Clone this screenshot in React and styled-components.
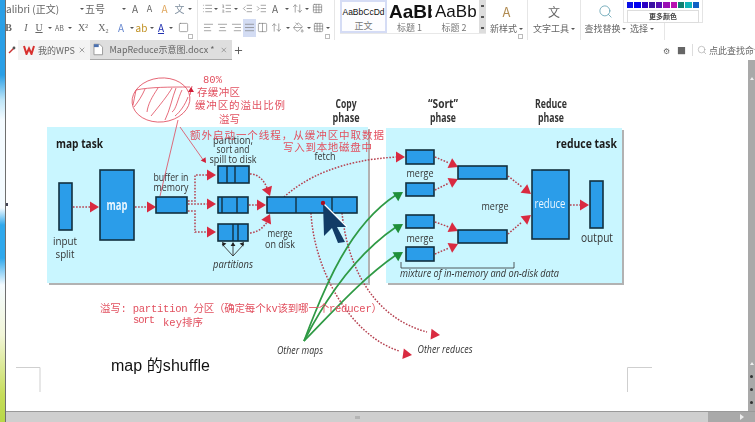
import React from 'react';
import styled, { createGlobalStyle } from 'styled-components';
import {
  AlignCenter, AlignJustify, AlignLeft, AlignRight, Grid3x3, IndentDecrease, IndentIncrease,
  List, ListOrdered, Plus, Search, X, ArrowUpDown, Columns2, PaintBucket, Square,
} from 'lucide-react';

const GlobalStyle = createGlobalStyle`
  html, body { margin: 0; padding: 0; background: #fff; overflow: hidden; }
  body { font-family: "Noto Sans CJK SC", "Liberation Sans", sans-serif; }
`;

const Screen = styled.div`
  width: 755px;
  height: 422px;
  display: flex;
  overflow: hidden;
`;

const DesktopEdge = styled.div`
  width: 5px;
  flex: none;
  border-right: 1px solid #6f6f6f;
  background: linear-gradient(#2a9fe6 0, #2a9fe6 75px, #bfe6f8 100px, #f4fbff 120px, #f4fbff 208px, #2fa8ec 225px, #2fa8ec 258px, #f4fbff 285px, #f2f6d8 335px, #c6dd5a 395px, #b8d848 422px);
`;

const Window = styled.div`
  flex: 1;
  min-width: 0;
  display: flex;
  flex-direction: column;
`;

const Ribbon = styled.div`
  height: 40px;
  flex: none;
  display: flex;
  position: relative;
  color: #666;
  font-size: 9px;
  filter: blur(0.4px);
`;

const FontGroup = styled.div`
  width: 191px;
  flex: none;
  border-right: 1px solid #e6e6e6;
  position: relative;
`;

const ParaGroup = styled.div`
  width: 137px;
  flex: none;
  padding-left: 3px;
  box-sizing: border-box;
  border-right: 1px solid #e6e6e6;
  position: relative;
`;

const Row = styled.div`
  height: 19px;
  display: flex;
  align-items: center;
  &:first-child { margin-top: -1px; }
`;

const Cell = styled.div`
  width: ${(p) => p.$w}px;
  height: 18px;
  flex: none;
  margin-left: ${(p) => p.$ml || 0}px;
  display: flex;
  align-items: center;
  justify-content: ${(p) => (p.$left ? 'flex-start' : 'center')};
  font-size: ${(p) => p.$size || 9}px;
  font-family: ${(p) => (p.$serif ? '"Liberation Serif", serif' : 'inherit')};
  font-style: ${(p) => (p.$italic ? 'italic' : 'normal')};
  color: ${(p) => p.$color || '#666'};
  background: ${(p) => (p.$on ? '#d3dcf3' : 'transparent')};
  white-space: nowrap;
`;

const Caret = styled.span`
  width: ${(p) => p.$w || 7}px;
  flex: none;
  display: flex;
  justify-content: center;
  &::after {
    content: '';
    border: 2px solid transparent;
    border-top: 2.5px solid #555;
    border-bottom: 0;
  }
`;

const Launcher = styled.span`
  position: absolute;
  right: 4px;
  bottom: 1px;
  width: 3px;
  height: 3px;
  border: 1px solid #bbb;
`;

const Gallery = styled.div`
  display: flex;
  width: 146px;
  height: 33px;
  margin-left: 5px;
  flex: none;
  border-bottom: 1px solid #e8e8e8;
`;

const StyleCard = styled.div`
  width: ${(p) => p.$w}px;
  height: 33px;
  box-sizing: border-box;
  flex: none;
  display: flex;
  flex-direction: column;
  align-items: center;
  overflow: hidden;
  border: ${(p) => (p.$on ? '2px solid #d5dcf5' : '0')};
  background: ${(p) => (p.$on ? '#fdfdff' : 'transparent')};
`;

const StyleSample = styled.div`
  height: 20px;
  line-height: 20px;
  margin-top: ${(p) => (p.$on ? 0 : 2)}px;
  width: 100%;
  text-align: center;
  white-space: nowrap;
  overflow: hidden;
  color: #111;
  font-family: "Liberation Sans", sans-serif;
  font-size: ${(p) => p.$size}px;
  font-weight: ${(p) => (p.$bold ? 700 : 400)};
  padding-left: ${(p) => p.$pad || 0}px;
`;

const StyleName = styled.div`
  font-size: 9px;
  line-height: 11px;
  color: #777;
`;

const GalleryScroll = styled.div`
  width: 7px;
  height: 33px;
  margin-left: 3px;
  flex: none;
  display: flex;
  flex-direction: column;
  background: #ddd;
  align-items: center;
  justify-content: space-around;
  & > span { width: 3px; height: 2px; background: #555; }
`;

const BigTool = styled.div`
  width: ${(p) => p.$w}px;
  flex: none;
  box-sizing: border-box;
  padding-right: ${(p) => p.$pr || 0}px;
  display: flex;
  flex-direction: column;
  align-items: center;
  position: relative;
  ${(p) => (p.$line ? 'border-right: 1px solid #e6e6e6;' : '')}
  height: 40px;
`;

const BigIcon = styled.div`
  height: 22px;
  display: flex;
  align-items: center;
  justify-content: center;
`;

const BigLabel = styled.div`
  font-size: 9px;
  line-height: 13px;
  color: #666;
  white-space: nowrap;
  display: flex;
  align-items: center;
  gap: 1px;
`;

const Palette = styled.div`
  position: absolute;
  left: 617px;
  top: 0;
  width: 80px;
  height: 23px;
  box-sizing: border-box;
  padding: 2px 3px 0;
  background: #fff;
  border: 1px solid #e4e4e4;
  border-top: 0;
`;

const Swatches = styled.div`
  display: flex;
  gap: 1px;
  height: 6px;
`;

const Swatch = styled.i`
  flex: 1;
  background: ${(p) => p.$c};
`;

const MoreColors = styled.div`
  height: 11px;
  margin-top: 2px;
  border: 1px solid #ddd;
  font-size: 7px;
  line-height: 11px;
  font-weight: 700;
  text-align: center;
  color: #444;
`;

const TabBar = styled.div`
  height: 20px;
  flex: none;
  display: flex;
  align-items: stretch;
  background: #fff;
  color: #666;
  font-size: 9px;
  filter: blur(0.3px);
`;

const Pin = styled.div`
  width: 12px;
  flex: none;
  display: flex;
  align-items: center;
  justify-content: center;
`;

const Tab = styled.div`
  width: ${(p) => p.$w}px;
  flex: none;
  box-sizing: border-box;
  padding: 0 4px 0 ${(p) => p.$pad}px;
  display: flex;
  align-items: center;
  gap: ${(p) => p.$gap}px;
  white-space: nowrap;
  background: ${(p) => (p.$on ? '#dedede' : '#f3f3f3')};
  border-bottom: ${(p) => (p.$on ? '1px solid #aaa' : '0')};
`;

const TabTitle = styled.span`
  flex: 1;
`;

const Tail = styled.div`
  margin-left: auto;
  display: flex;
  align-items: center;
  overflow: hidden;
  width: 94px;
  flex: none;
  white-space: nowrap;
  & > * { flex: none; }
`;

const TailBar = styled.span`
  width: 1px;
  height: 12px;
  margin-right: 4px;
  background: #ddd;
`;

const DocRow = styled.div`
  flex: 1;
  min-height: 0;
  display: flex;
`;

const Page = styled.div`
  flex: 1;
  min-width: 0;
  background: #fff;
`;

const Figure = styled.svg`
  display: block;
  width: 100%;
  height: 100%;
  filter: blur(0.45px);
`;

const SideRail = styled.div`
  width: 7px;
  flex: none;
  background: #a9a9a9;
  display: flex;
  flex-direction: column;
  justify-content: flex-end;
  align-items: center;
  gap: 10px;
  padding: 17px 0 7px;
  box-sizing: border-box;
`;

const RailArrow = styled.i`
  border: 2.5px solid transparent;
  border-bottom: 3px solid #eee;
  border-top: 0;
  margin-bottom: ${(p) => (p.$far ? 'auto' : '0')};
`;

const RailDot = styled.i`
  width: 3px;
  height: 3px;
  background: #333;
  border-radius: 50%;
`;

const BottomBar = styled.div`
  height: 11px;
  flex: none;
  display: flex;
  background: #a9a9a9;
  border-top: 1px solid #999;
  box-sizing: border-box;
`;

const BottomThumb = styled.div`
  width: 702px;
  flex: none;
  background: #cfcfcf;
  display: flex;
  align-items: center;
  justify-content: center;
  & > span { width: 5px; height: 3px; background: #b4b4b4; }
`;

const BottomArrow = styled.div`
  flex: 1;
  padding-left: 20px;
  display: flex;
  align-items: center;
  justify-content: center;
  &::after {
    content: '';
    border: 3px solid transparent;
    border-left: 4px solid #eee;
    border-right: 0;
  }
`;

// condensed book-style label, squeezed to the width it has in the picture
const Label = ({ x, y, w, size = 11.5, bold, italic, fill = '#343434', anchor = 'middle', children }) => (
  <text
    x={x}
    y={y}
    textLength={w}
    lengthAdjust="spacingAndGlyphs"
    textAnchor={anchor}
    fontSize={size}
    fontWeight={bold ? 700 : 400}
    fontStyle={italic ? 'italic' : 'normal'}
    fill={fill}
    fontFamily='"Open Sans", "Liberation Sans", sans-serif'
  >
    {children}
  </text>
);

const Note = ({ x, y, w, size = 10.5, children }) => (
  <text
    x={x}
    y={y}
    textLength={w}
    fontSize={size}
    fill="#e2505f"
    fontFamily='"Liberation Mono", "Noto Sans CJK SC", monospace'
  >
    {children}
  </text>
);

const Box = ({ x, y, w, h, bars = [] }) => (
  <g>
    <rect x={x} y={y} width={w} height={h} fill="#2b9de9" stroke="#12303f" strokeWidth="1.6" />
    {bars.map((b) => (
      <line key={b} x1={b} x2={b} y1={y} y2={y + h} stroke="#12303f" strokeWidth="1.4" />
    ))}
  </g>
);

// triangle head with its tip at x,y, pointing along the angle in degrees
const Head = ({ x, y, a = 0, fill = '#d92a40', size = 9 }) => (
  <polygon
    points={`0,0 ${-size},${-size * 0.6} ${-size},${size * 0.6}`}
    fill={fill}
    transform={`translate(${x} ${y}) rotate(${a})`}
  />
);

const Dots = ({ d, color = '#b5404f' }) => (
  <path d={d} fill="none" stroke={color} strokeWidth="1.5" strokeDasharray="1.6 1.5" />
);

const swatches = ['#0a10e6', '#0000f0', '#2a00c4', '#3a10a4', '#5610b4', '#9a10b4', '#b810b0', '#108070', '#10b4b8', '#1060c4'];

const ic = { size: 11, strokeWidth: 1.4, color: '#777' };

const Diagram = () => (
  <Figure viewBox="6 60 742 351">
    {/* panels with their drop shadow */}
    <rect x="49" y="129" width="321" height="156" fill="#b2b2b2" />
    <rect x="388" y="130" width="236" height="155" fill="#b2b2b2" />
    <rect x="47" y="127" width="321" height="156" fill="#c9f6ff" />
    <rect x="386" y="128" width="236" height="155" fill="#c9f6ff" />

    {/* map side dotted runs */}
    <Dots d="M73 207H91" />
    <Dots d="M135 207H148" />
    <Dots d="M188 204H208" />
    <Dots d="M188 201H195V175H208" />
    <Dots d="M188 211H195V232H208" />
    <Dots d="M250 174C258 174 264 180 267 188" />
    <Dots d="M249 205H258" />
    <Dots d="M250 233C258 232 263 228 267 222" />
    <Dots d="M284 197C305 178 340 160 397 157" />
    <Dots d="M311 213C314 270 350 335 399 351" />
    <Dots d="M342 213C348 270 375 318 427 332" />

    <Head x={99} y={207} />
    <Head x={156} y={207} />
    <Head x={216} y={204} />
    <Head x={216} y={175} />
    <Head x={216} y={232} />
    <Head x={270} y={196} a={70} />
    <Head x={266} y={205} />
    <Head x={270} y={214} a={-65} />
    <Head x={405} y={157} />
    <Head x={412} y={355} a={8} />
    <Head x={440} y={335} a={5} />

    <Box x={59} y={183} w={13} h={47} />
    <Box x={100} y={170} w={34} h={70} />
    <Box x={156} y={197} w={31} h={16} />
    <Box x={218} y={166} w={31} h={17} bars={[227, 235]} />
    <Box x={218} y={197} w={30} h={16} bars={[222, 237]} />
    <Box x={218} y={224} w={30} h={17} bars={[233, 238]} />
    <Box x={267} y={197} w={90} h={16} bars={[296, 332]} />

    {/* partitions pointers */}
    <g stroke="#333" strokeWidth="0.9" fill="none">
      <path d="M233 256L222 244M233 256V244M233 256L244 244" />
    </g>
    <Head x={222} y={242} a={-130} fill="#222" size={4} />
    <Head x={233} y={242} a={-90} fill="#222" size={4} />
    <Head x={244} y={242} a={-50} fill="#222" size={4} />

    {/* reduce side */}
    <Dots d="M435 157L449 163" />
    <Dots d="M435 190L449 183" />
    <Dots d="M435 222L449 227" />
    <Dots d="M435 254L449 248" />
    <Dots d="M508 176L522 187" />
    <Dots d="M508 234L522 222" />
    <Dots d="M570 205H581" />

    <Head x={458} y={167} a={25} />
    <Head x={458} y={179} a={-25} />
    <Head x={458} y={231} a={25} />
    <Head x={458} y={244} a={-25} />
    <Head x={531} y={194} a={38} />
    <Head x={531} y={215} a={-38} />
    <Head x={589} y={205} />

    <Box x={406} y={150} w={28} h={14} />
    <Box x={406} y={183} w={28} h={13} />
    <Box x={406} y={215} w={28} h={13} />
    <Box x={406} y={247} w={28} h={14} />
    <Box x={458} y={166} w={49} h={13} />
    <Box x={458} y={230} w={49} h={13} />
    <Box x={532} y={170} w={37} h={69} />
    <Box x={590} y={181} w={13} h={47} />

    <path d="M401 262V268H514V262" fill="none" stroke="#333" strokeWidth="0.8" />

    {/* other maps */}
    <g fill="none" stroke="#2f9a45" strokeWidth="1.7">
      <path d="M304 341C325 285 350 225 396 195" />
      <path d="M304 341C325 300 355 255 396 227" />
      <path d="M304 341C330 315 360 280 396 255" />
    </g>
    <Head x={403} y={192} a={-32} fill="#1f8f3a" />
    <Head x={403} y={224} a={-32} fill="#1f8f3a" />
    <Head x={403} y={252} a={-32} fill="#1f8f3a" />

    {/* mouse pointer */}
    <polygon points="323,203 347,227 337,227 345,242 338,243 332,228 324,236" fill="#123c66" />
    <line x1="323" y1="203" x2="347" y2="227" stroke="#fff" strokeWidth="1.2" />
    <circle cx="323" cy="203" r="2.2" fill="#a80f22" />

    {/* printed labels */}
    <Label x={346} y={108} w={21} bold>Copy</Label>
    <Label x={346} y={122} w={27} bold>phase</Label>
    <Label x={443} y={108} w={30} bold>“Sort”</Label>
    <Label x={443} y={122} w={26} bold>phase</Label>
    <Label x={551} y={108} w={32} bold>Reduce</Label>
    <Label x={551} y={122} w={26} bold>phase</Label>
    <Label x={56} y={148} w={47} size={13} bold anchor="start" fill="#1c1c1c">map task</Label>
    <Label x={556} y={148} w={61} size={13} bold anchor="start" fill="#1c1c1c">reduce task</Label>
    <Label x={233} y={144} w={40}>partition,</Label>
    <Label x={233} y={153} w={33}>sort and</Label>
    <Label x={233} y={163} w={47}>spill to disk</Label>
    <Label x={171} y={181} w={35}>buffer in</Label>
    <Label x={171} y={191} w={35}>memory</Label>
    <Label x={117} y={210} w={21} size={14} bold fill="#e8f6ff">map</Label>
    <Label x={65} y={245} w={24}>input</Label>
    <Label x={65} y={258} w={19}>split</Label>
    <Label x={280} y={237} w={25}>merge</Label>
    <Label x={280} y={248} w={30}>on disk</Label>
    <Label x={233} y={268} w={40} italic>partitions</Label>
    <Label x={325} y={160} w={21}>fetch</Label>
    <Label x={420} y={177} w={27}>merge</Label>
    <Label x={420} y={242} w={27}>merge</Label>
    <Label x={495} y={210} w={27}>merge</Label>
    <Label x={550} y={208} w={31} size={13} fill="#e8f6ff">reduce</Label>
    <Label x={597} y={242} w={32} size={12}>output</Label>
    <Label x={400} y={277} w={159} italic anchor="start">mixture of in-memory and on-disk data</Label>
    <Label x={300} y={354} w={46} italic>Other maps</Label>
    <Label x={445} y={353} w={55} italic>Other reduces</Label>

    {/* red pen */}
    <g fill="none" stroke="#e0485a" strokeWidth="0.8">
      <ellipse cx="161" cy="100" rx="29" ry="22" transform="rotate(-6 161 100)" />
      <path d="M136 90C150 87 170 87 190 87" />
      <path d="M136 90L133 105M145 89C142 96 138 102 134 107M158 88C152 97 148 104 147 112" />
      <path d="M172 88C168 95 160 105 151 116M176 88C172 98 170 110 165 120M182 90C178 98 176 110 172 112M188 97C185 105 180 112 175 116" />
      <path d="M178 120L160 196" />
      <path d="M180 127L204 161" />
      <path d="M192 86L190 95" />
    </g>
    <Head x={206} y={163} a={55} size={5} fill="#d0203a" />
    <Head x={191} y={87} a={-90} size={5} fill="#d0203a" />

    <Note x={203} y={83} w={19}>80%</Note>
    <Note x={197} y={96} w={43}>存缓冲区</Note>
    <Note x={195} y={109} w={90}>缓冲区的溢出比例</Note>
    <Note x={219} y={123} w={21}>溢写</Note>
    <Note x={190} y={139} w={194}>额外启动一个线程，从缓冲区中取数据</Note>
    <Note x={283} y={151} w={89}>写入到本地磁盘中</Note>
    <Note x={100} y={312} w={282}>溢写: partition 分区（确定每个kv该到哪一个reducer）</Note>
    <Note x={133} y={323} w={22}>sort</Note>
    <Note x={163} y={326} w={40}>key排序</Note>

    <text x="111" y="371" fontSize="16" fill="#111" textLength="99" fontFamily='"Liberation Sans", "Noto Sans CJK SC", sans-serif'>map 的shuffle</text>

    {/* page corners */}
    <path d="M16 367.5H40V392" fill="none" stroke="#cfcfcf" />
    <path d="M652 367.5H627.5V392" fill="none" stroke="#cfcfcf" />
    <rect x="6" y="203" width="2" height="3" fill="#445" />
  </Figure>
);

export default function App() {
  return (
    <Screen>
      <GlobalStyle />
      <DesktopEdge />
      <Window>
        <Ribbon>
          <FontGroup>
            <Row>
              <Cell $w={72} $left $size={10}>alibri (正文)</Cell>
              <Caret />
              <Cell $w={35} $left $size={10}>五号</Cell>
              <Caret />
              <Cell $w={16} $size={10}>A</Cell>
              <Cell $w={13} $size={9}>A</Cell>
              <Cell $w={17} $size={10} $color="#e0a860">A</Cell>
              <Cell $w={13} $size={10} $color="#8090a0">文</Cell>
              <Caret />
            </Row>
            <Row>
              <Cell $w={5} $serif $size={10}><b>B</b></Cell>
              <Cell $w={12} $ml={9} $serif $italic $size={10}>I</Cell>
              <Cell $w={14} $serif $size={10}><u>U</u></Cell>
              <Caret />
              <Cell $w={13} $size={7}>AB</Cell>
              <Caret />
              <Cell $w={20} $serif $size={10}>X²</Cell>
              <Cell $w={21} $serif $size={10}>X₂</Cell>
              <Cell $w={14} $size={10} $color="#6a8ad0">A</Cell>
              <Caret />
              <Cell $w={13} $size={10} $color="#c09020">ab</Cell>
              <Caret />
              <Cell $w={12} $size={10} $color="#2030b0"><u>A</u></Cell>
              <Caret />
              <Cell $w={18}><Square {...ic} /></Cell>
            </Row>
            <Launcher />
          </FontGroup>
          <ParaGroup>
            <Row>
              <Cell $w={12}><List {...ic} /></Cell>
              <Caret $w={6} />
              <Cell $w={14}><ListOrdered {...ic} /></Cell>
              <Caret $w={6} />
              <Cell $w={16}><IndentDecrease {...ic} /></Cell>
              <Cell $w={12}><IndentIncrease {...ic} /></Cell>
              <Cell $w={16} $size={10}>A</Cell>
              <Caret />
              <Cell $w={14}><ArrowUpDown {...ic} /></Cell>
              <Caret $w={6} />
              <Cell $w={14}><Grid3x3 {...ic} /></Cell>
            </Row>
            <Row>
              <Cell $w={14}><AlignLeft {...ic} /></Cell>
              <Cell $w={14}><AlignCenter {...ic} /></Cell>
              <Cell $w={14}><AlignRight {...ic} /></Cell>
              <Cell $w={13} $on><AlignJustify {...ic} /></Cell>
              <Cell $w={12}><Columns2 {...ic} /></Cell>
              <Cell $w={16}><ArrowUpDown {...ic} /></Cell>
              <Caret />
              <Cell $w={14}><PaintBucket {...ic} /></Cell>
              <Caret />
              <Cell $w={12}><Grid3x3 {...ic} /></Cell>
              <Caret />
            </Row>
            <Launcher />
          </ParaGroup>
          <Gallery>
            <StyleCard $w={47} $on>
              <StyleSample $size={8.5} $on>AaBbCcDd</StyleSample>
              <StyleName>正文</StyleName>
            </StyleCard>
            <StyleCard $w={45}>
              <StyleSample $size={19} $bold $pad={4}>AaBb</StyleSample>
              <StyleName>标题 1</StyleName>
            </StyleCard>
            <StyleCard $w={44}>
              <StyleSample $size={17} $pad={6}>AaBb(</StyleSample>
              <StyleName>标题 2</StyleName>
            </StyleCard>
            <GalleryScroll><span /><span /><span /></GalleryScroll>
          </Gallery>
          <BigTool $w={42} $line>
            <BigIcon><Cell $w={16} $size={13} $color="#b08a50">A</Cell></BigIcon>
            <BigLabel>新样式<Caret $w={5} /></BigLabel>
            <Launcher />
          </BigTool>
          <BigTool $w={53} $line>
            <BigIcon><Cell $w={16} $size={12}>文</Cell></BigIcon>
            <BigLabel>文字工具<Caret $w={5} /></BigLabel>
          </BigTool>
          <BigTool $w={49}>
            <BigIcon><Search size={15} strokeWidth={1.3} color="#5f9fb0" /></BigIcon>
            <BigLabel>查找替换<Caret $w={5} /></BigLabel>
          </BigTool>
          <BigTool $w={35} $pr={10} $line>
            <BigIcon />
            <BigLabel>选择<Caret $w={5} /></BigLabel>
          </BigTool>
          <Palette>
            <Swatches>{swatches.map((c) => <Swatch key={c} $c={c} />)}</Swatches>
            <MoreColors>更多颜色</MoreColors>
          </Palette>
        </Ribbon>
        <TabBar>
          <Pin><svg width="8" height="8" viewBox="0 0 8 8"><path d="M1 7L6 2" stroke="#c33" strokeWidth="1.4" /><circle cx="6" cy="2" r="1.4" fill="#555" /></svg></Pin>
          <Tab $w={72} $pad={5} $gap={3}>
            <svg width="12" height="10" viewBox="0 0 12 10"><path d="M1 1L3.5 9L6 3.5L8.5 9L11 1" fill="none" stroke="#d8302e" strokeWidth="2" /></svg>
            <TabTitle>我的WPS</TabTitle>
            <X size={8} color="#777" />
          </Tab>
          <Tab $w={142} $pad={3} $gap={6} $on>
            <svg width="11" height="13" viewBox="0 0 11 13"><path d="M1 1H7L10 4V12H1Z" fill="#fff" stroke="#999" /><path d="M1 1H6V4H1Z" fill="#4a70b0" /></svg>
            <TabTitle>MapReduce示意图.docx *</TabTitle>
            <X size={8} color="#777" />
          </Tab>
          <Pin><Plus size={11} color="#555" strokeWidth={2} /></Pin>
          <Tail>
            <Cell $w={10} $size={8}>⚙</Cell>
            <Cell $w={21} $size={9}>■</Cell>
            <TailBar />
            <Search size={10} color="#999" strokeWidth={1.3} />
            <span>&nbsp;点此查找命令</span>
          </Tail>
        </TabBar>
        <DocRow>
          <Page><Diagram /></Page>
          <SideRail>
            <RailArrow $far />
            <RailArrow />
            <RailDot />
            <RailDot />
            <RailDot />
          </SideRail>
        </DocRow>
        <BottomBar>
          <BottomThumb><span /></BottomThumb>
          <BottomArrow />
        </BottomBar>
      </Window>
    </Screen>
  );
}
